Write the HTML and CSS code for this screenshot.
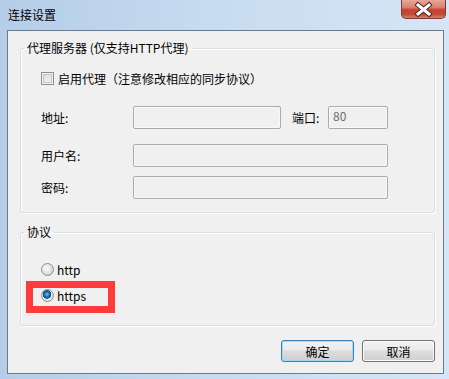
FILE: index.html
```html
<!DOCTYPE html>
<html lang="zh-CN">
<head>
    <meta charset="UTF-8">
    <title>连接设置</title>
    <link rel="stylesheet" href="styles.css">
</head>
<body>

<div class="window">
    <div class="titlebar">
        <span class="title">连接设置</span>
        <div class="close">
            <svg width="43" height="17" viewBox="0 0 43 17">
                <path d="M16 4 L27 13 M27 4 L16 13" stroke="#4a2a2a" stroke-width="5" stroke-linecap="square"/>
                <path d="M16 4 L27 13 M27 4 L16 13" stroke="#fff" stroke-width="3" stroke-linecap="square"/>
            </svg>
        </div>
    </div>

    <div class="client">
        <fieldset class="group proxy">
            <legend>代理服务器 (仅支持HTTP代理)</legend>
            <div class="check-row">
                <span class="checkbox"></span>
                <span>启用代理（注意修改相应的同步协议）</span>
            </div>
            <div class="field-row row-addr">
                <label>地址:</label>
                <span class="input addr"></span>
                <label class="port-label">端口:</label>
                <span class="input port">80</span>
            </div>
            <div class="field-row row-user">
                <label>用户名:</label>
                <span class="input wide"></span>
            </div>
            <div class="field-row row-pass">
                <label>密码:</label>
                <span class="input wide"></span>
            </div>
        </fieldset>

        <fieldset class="group protocol">
            <legend>协议</legend>
            <div class="radio-row row-http">
                <span class="radio"></span>
                <span>http</span>
            </div>
            <div class="radio-row row-https">
                <span class="radio checked"></span>
                <span>https</span>
                <div class="mark"></div>
            </div>
        </fieldset>

        <div class="buttons">
            <button class="btn default">确定</button>
            <button class="btn">取消</button>
        </div>
    </div>
</div>

</body>
</html>
```

FILE: styles.css
```css
body {
    margin: 0;
    width: 449px;
    height: 379px;
    overflow: hidden;
    font-family: "Noto Sans CJK SC", "Liberation Sans", sans-serif;
    font-size: 12px;
    color: #000;
    background: linear-gradient(to right, #b5cde8, #c8dcf1 50%, #d6e6f6);
}
.window {
    height: 379px;
    display: flex;
    flex-direction: column;
}
.titlebar {
    height: 30px;
    display: flex;
    justify-content: space-between;
    align-items: flex-start;
}
.title {
    padding-left: 8px;
    line-height: 30px;
    font-size: 12px;
}
.close {
    width: 45px;
    height: 19px;
    margin-right: 3px;
    box-sizing: border-box;
    border: 1px solid #7c3a32;
    border-top: none;
    border-radius: 0 0 5px 5px;
    background: linear-gradient(#e8a698, #dc8270 40%, #c8402e 55%, #c44a38 80%, #d9806a);
    display: flex;
    align-items: center;
    justify-content: center;
}
.close svg {
    display: block;
}
.client {
    margin-left: 7px;
    width: 437px;
    height: 344px;
    box-sizing: border-box;
    border: 1px solid #6b7a8a;
    background: #f0f0f0;
    padding: 0 8px 0 12px;
}
.group {
    margin: 0;
    padding: 0 0 0 20px;
    min-width: 0;
    border: 1px solid #d5dfe5;
    border-radius: 3px;
    box-shadow: inset 1px 1px 0 #fff, 1px 1px 0 #fff;
}
.group legend {
    margin-left: -17px;
    padding: 0 3px;
    line-height: 14px;
    font-size: 12px;
}
.proxy {
    margin-top: 10px;
    padding-bottom: 13px;
}
.check-row {
    margin-top: 16px;
    height: 14px;
    display: flex;
    align-items: center;
    gap: 4px;
}
.checkbox {
    width: 13px;
    height: 13px;
    box-sizing: border-box;
    border: 1px solid #8f8f8f;
    background: linear-gradient(135deg, #dcdcdc, #f4f4f4);
    box-shadow: inset 0 0 0 1px #f4f4f4, inset 0 0 0 2px #c4c4c4;
}
.field-row {
    height: 23px;
    display: flex;
    align-items: center;
}
.field-row label {
    width: 92px;
}
.row-addr { margin-top: 21px; }
.row-user { margin-top: 15px; }
.row-pass { margin-top: 9px; }
.input {
    height: 23px;
    box-sizing: border-box;
    border: 1px solid #ababab;
    border-radius: 2px;
    background: #f0f0f0;
    box-shadow: inset 0 0 0 1px #f8f8f8;
    color: #6d6d6d;
    padding: 1px 4px;
    line-height: 16px;
}
.input.addr { width: 148px; }
.field-row .port-label {
    width: 36px;
    margin-left: 11px;
}
.input.port { width: 60px; }
.input.wide { width: 255px; }
.protocol {
    margin-top: 12px;
    padding-bottom: 23px;
}
.radio-row {
    height: 14px;
    display: flex;
    align-items: center;
    gap: 3px;
    position: relative;
}
.row-http { margin-top: 23px; }
.row-https { margin-top: 12px; }
.radio {
    width: 13px;
    height: 13px;
    box-sizing: border-box;
    border-radius: 50%;
    border: 1px solid #8e8f8f;
    background: radial-gradient(circle at 40% 40%, #fdfdfd, #d8d8d8 70%);
}
.radio.checked {
    background: radial-gradient(circle at 45% 40%, #6ec3f0 0, #1b6fb0 2.5px, #0d4a80 4px, #e8e8e8 4.6px, #d8d8d8 100%);
}
.mark {
    position: absolute;
    left: -15px;
    top: -7px;
    width: 89px;
    height: 32px;
    box-sizing: border-box;
    border: 7px solid #ff3a3a;
}
.buttons {
    margin-top: 14px;
    display: flex;
    justify-content: flex-end;
    gap: 8px;
}
.btn {
    width: 73px;
    height: 22px;
    padding: 0;
    font-family: inherit;
    font-size: 12px;
    color: #000;
    border: 1px solid #707070;
    border-radius: 3px;
    background: linear-gradient(#f2f2f2, #ebebeb 45%, #dddddd 50%, #cfcfcf);
    box-shadow: inset 0 0 0 1px #fcfcfc;
}
.btn.default {
    border-color: #3c7fb1;
    box-shadow: inset 0 0 0 1px #9fdcf9;
}
```
